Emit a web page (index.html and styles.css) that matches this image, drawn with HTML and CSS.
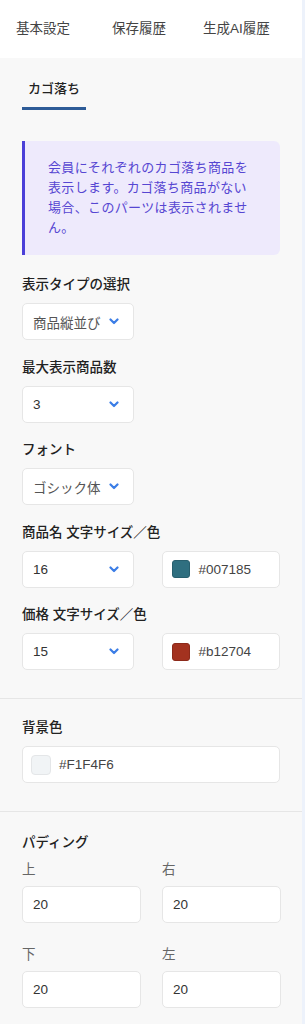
FILE: index.html
```html
<!DOCTYPE html>
<html lang="ja">
<head>
  <meta charset="UTF-8">
  <title>カゴ落ち設定</title>
  <link rel="stylesheet" href="styles.css">
</head>
<body>
  <div class="panel">
    <div class="tabs">
      <div class="tab">基本設定</div>
      <div class="tab tab-2">保存履歴</div>
      <div class="tab tab-3">生成AI履歴</div>
    </div>

    <div class="section section-main">
      <div class="subtabs">
        <div class="subtab active">カゴ落ち</div>
      </div>

      <div class="notice">
        会員にそれぞれのカゴ落ち商品を表示します。カゴ落ち商品がない場合、このパーツは表示されません。
      </div>

      <div class="field">
        <div class="label">表示タイプの選択</div>
        <div class="select">
          <span>商品縦並び</span>
          <svg class="chev" width="10" height="7" viewBox="0 0 10 7"><path d="M1.5 1.5 L5 5 L8.5 1.5" fill="none" stroke="#3b7de6" stroke-width="2.2" stroke-linecap="round" stroke-linejoin="round"/></svg>
        </div>
      </div>

      <div class="field">
        <div class="label">最大表示商品数</div>
        <div class="select">
          <span class="dark">3</span>
          <svg class="chev" width="10" height="7" viewBox="0 0 10 7"><path d="M1.5 1.5 L5 5 L8.5 1.5" fill="none" stroke="#3b7de6" stroke-width="2.2" stroke-linecap="round" stroke-linejoin="round"/></svg>
        </div>
      </div>

      <div class="field">
        <div class="label">フォント</div>
        <div class="select">
          <span>ゴシック体</span>
          <svg class="chev" width="10" height="7" viewBox="0 0 10 7"><path d="M1.5 1.5 L5 5 L8.5 1.5" fill="none" stroke="#3b7de6" stroke-width="2.2" stroke-linecap="round" stroke-linejoin="round"/></svg>
        </div>
      </div>

      <div class="field">
        <div class="label">商品名 文字サイズ／色</div>
        <div class="pair">
          <div class="select">
            <span class="dark">16</span>
            <svg class="chev" width="10" height="7" viewBox="0 0 10 7"><path d="M1.5 1.5 L5 5 L8.5 1.5" fill="none" stroke="#3b7de6" stroke-width="2.2" stroke-linecap="round" stroke-linejoin="round"/></svg>
          </div>
          <div class="color">
            <span class="swatch" style="background: #2f6f80; border-color: #285f6e;"></span>
            <span>#007185</span>
          </div>
        </div>
      </div>

      <div class="field last">
        <div class="label">価格 文字サイズ／色</div>
        <div class="pair">
          <div class="select">
            <span class="dark">15</span>
            <svg class="chev" width="10" height="7" viewBox="0 0 10 7"><path d="M1.5 1.5 L5 5 L8.5 1.5" fill="none" stroke="#3b7de6" stroke-width="2.2" stroke-linecap="round" stroke-linejoin="round"/></svg>
          </div>
          <div class="color">
            <span class="swatch" style="background: #a3321f; border-color: #8c2a1a;"></span>
            <span>#b12704</span>
          </div>
        </div>
      </div>
    </div>

    <div class="section">
      <div class="field last">
        <div class="label">背景色</div>
        <div class="color wide">
          <span class="swatch big" style="background: #f1f4f6;"></span>
          <span>#F1F4F6</span>
        </div>
      </div>
    </div>

    <div class="section section-padding">
      <div class="label">パディング</div>
      <div class="grid">
        <div>
          <div class="sublabel">上</div>
          <div class="input">20</div>
        </div>
        <div>
          <div class="sublabel">右</div>
          <div class="input">20</div>
        </div>
        <div>
          <div class="sublabel">下</div>
          <div class="input">20</div>
        </div>
        <div>
          <div class="sublabel">左</div>
          <div class="input">20</div>
        </div>
      </div>
    </div>
  </div>
</body>
</html>
```

FILE: styles.css
```css
* {
  box-sizing: border-box;
}
body {
  margin: 0;
  background: #edf2fb;
  font-family: "Liberation Sans", "Noto Sans CJK JP", sans-serif;
  color: #222;
}
.panel {
  width: 302px;
  background: #f8f8f8;
  height: 1024px;
  overflow: hidden;
}
.tabs {
  display: flex;
  height: 58px;
  align-items: center;
  background: white;
  padding-left: 16px;
}
.tab {
  font-size: 13.5px;
  color: #444;
  line-height: 18px;
}
.tab-2 {
  margin-left: 42px;
}
.tab-3 {
  margin-left: 37px;
}
.section {
  padding: 20px 22px 28px;
  border-bottom: 1px solid #e6e6e6;
}
.section-main {
  padding-top: 0;
}
.section-padding {
  padding-top: 22px;
  border-bottom: none;
}
.subtabs {
  display: flex;
  padding-top: 22px;
  margin-bottom: 31px;
}
.subtab {
  font-size: 13px;
  font-weight: 500;
  line-height: 18px;
  padding: 0 6px 9px;
  border-bottom: 3px solid #2d5b97;
}
.notice {
  background: #eeeafc;
  border-left: 3px solid #4b3fd8;
  border-radius: 0 6px 6px 0;
  padding: 17px 27px 17px 23px;
  font-size: 13px;
  letter-spacing: 0.35px;
  line-height: 20px;
  color: #5646d2;
  margin-bottom: 21px;
}
.field {
  margin-bottom: 18.5px;
}
.field.last {
  margin-bottom: 0;
}
.label {
  font-size: 13.5px;
  font-weight: 500;
  line-height: 18px;
  margin-bottom: 9px;
}
.select, .color, .input {
  height: 37px;
  background: white;
  border: 1px solid #e6e6e6;
  border-radius: 5px;
  display: flex;
  align-items: center;
  font-size: 13.5px;
  color: #555;
}
.select {
  width: 112px;
  padding: 0 14px 0 10px;
  justify-content: space-between;
}
.dark {
  color: #333;
}
.pair {
  display: flex;
  gap: 28px;
}
.color {
  width: 119px;
  padding-left: 9px;
  gap: 9px;
  color: #444;
}
.color.wide {
  width: 100%;
  padding-left: 8px;
  gap: 8px;
}
.swatch {
  width: 18px;
  height: 18px;
  border-radius: 3px;
  border: 1px solid #ddd;
}
.swatch.big {
  width: 20px;
  height: 20px;
  border-radius: 4px;
  border-color: #e4e6e8;
}
.grid {
  display: grid;
  grid-template-columns: 119px 119px;
  column-gap: 21px;
  row-gap: 23px;
  margin-top: 2px;
}
.sublabel {
  font-size: 13.5px;
  color: #666;
  line-height: 18px;
  margin-bottom: 7px;
}
.input {
  padding-left: 10px;
  color: #333;
}
```
